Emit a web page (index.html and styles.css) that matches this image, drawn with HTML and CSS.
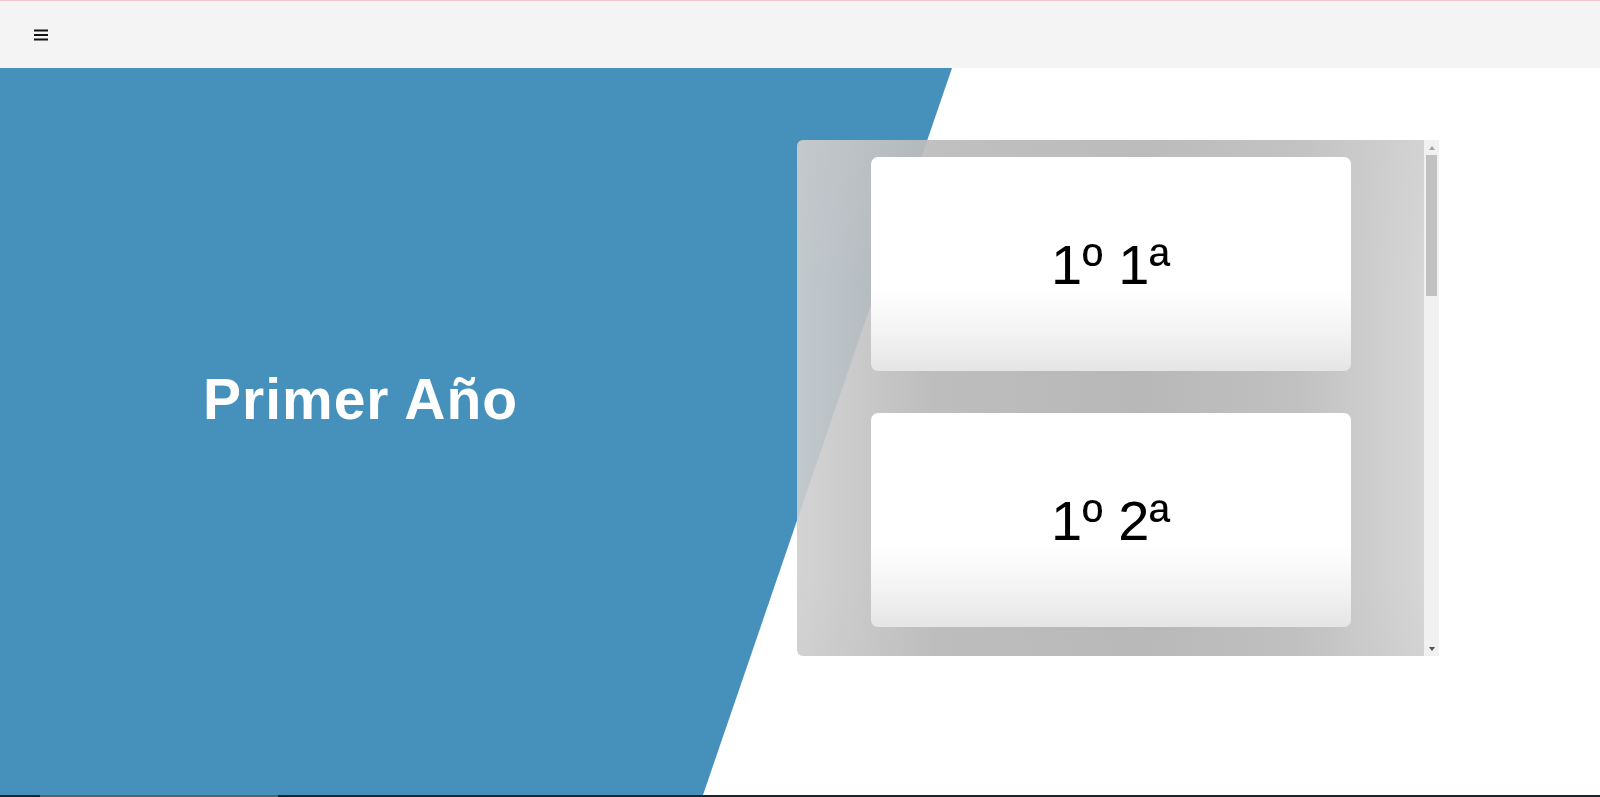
FILE: index.html
```html
<!DOCTYPE html>
<html lang="es">
<head>
<meta charset="utf-8">
<title>Primer Año</title>
<link rel="stylesheet" href="styles.css">
</head>
<body>
<header class="topbar">
  <button class="menu-btn" aria-label="Menú">
    <svg width="14" height="12" viewBox="0 0 14 12"><rect x="0" y="0.5" width="14" height="2" fill="#111"/><rect x="0" y="5" width="14" height="2" fill="#111"/><rect x="0" y="9.5" width="14" height="2" fill="#111"/></svg>
  </button>
</header>
<main class="stage">
  <div class="stage-bg"></div>
  <section class="title-col">
    <h1 class="title">Primer Año</h1>
  </section>
  <div class="panel">
    <div class="panel-list">
      <div class="card">1º 1ª</div>
      <div class="card">1º 2ª</div>
    </div>
    <div class="scrollbar">
      <span class="sb-btn"><span class="sb-arrow-up"></span></span>
      <span class="sb-track"><span class="sb-thumb"></span></span>
      <span class="sb-btn"><span class="sb-arrow-down"></span></span>
    </div>
  </div>
</main>
<footer class="bottombar"><span class="bottombar-thumb"></span></footer>
</body>
</html>
```

FILE: styles.css
```css
html, body {
  margin: 0;
  padding: 0;
  height: 797px;
  overflow: hidden;
  background: #ffffff;
  font-family: "Liberation Sans", Arial, sans-serif;
}

.topbar {
  box-sizing: border-box;
  height: 68px;
  border-top: 1px solid #f0c4cd;
  background: #f4f4f4;
  display: flex;
  align-items: center;
  padding-left: 34px;
}

.menu-btn {
  display: flex;
  padding: 0;
  margin: 0;
  border: 0;
  background: none;
  cursor: pointer;
}

.stage {
  position: relative;
  box-sizing: border-box;
  height: 727px;
  display: grid;
  grid-template-columns: 710px 642px;
  column-gap: 87px;
  align-items: stretch;
  align-content: start;
  padding-top: 72px;
}

.stage-bg {
  position: absolute;
  inset: 0;
  background: #4690bc;
  clip-path: polygon(0 0, 952px 0, 703px 100%, 0 100%);
}

.title-col {
  position: relative;
  display: flex;
  align-items: center;
  justify-content: center;
  padding-left: 11px;
  padding-top: 2px;
}

.title {
  margin: 0;
  color: #ffffff;
  font-size: 57px;
  font-weight: 700;
  letter-spacing: 1px;
  white-space: nowrap;
}

.panel {
  position: relative;
  height: 516px;
  display: flex;
  border-radius: 6px 0 0 6px;
  overflow: hidden;
}

.panel-list {
  box-sizing: border-box;
  width: 627px;
  height: 516px;
  overflow: hidden;
  background:
    linear-gradient(to bottom, rgba(200,200,200,0.25) 0%, rgba(200,200,200,0) 30%, rgba(200,200,200,0) 85%, rgba(190,190,190,0.15) 100%),
    linear-gradient(to right, rgba(207,207,207,0.9) 0%, rgba(182,182,182,0.9) 22%, rgba(176,176,176,0.9) 55%, rgba(186,186,186,0.9) 80%, rgba(210,210,210,0.9) 100%);
  display: flex;
  flex-direction: column;
  align-items: center;
  gap: 42px;
  padding: 17px 0;
}

.card {
  flex: none;
  width: 480px;
  height: 214px;
  border-radius: 7px;
  background: linear-gradient(to bottom, #ffffff 0%, #ffffff 62%, #f3f3f3 82%, #e5e5e5 100%);
  display: flex;
  align-items: center;
  justify-content: center;
  color: #000000;
  font-size: 56px;
  line-height: 1;
  padding-top: 2px;
  box-sizing: border-box;
}

.scrollbar {
  width: 15px;
  height: 516px;
  background: #f1f1f1;
  display: flex;
  flex-direction: column;
}

.sb-btn {
  height: 15px;
  flex: none;
  display: flex;
  align-items: center;
  justify-content: center;
}

.sb-arrow-up {
  width: 0;
  height: 0;
  border-left: 3.5px solid transparent;
  border-right: 3.5px solid transparent;
  border-bottom: 4px solid #a3a3a3;
}

.sb-arrow-down {
  width: 0;
  height: 0;
  border-left: 3.5px solid transparent;
  border-right: 3.5px solid transparent;
  border-top: 4px solid #505050;
}

.sb-track {
  flex: 1;
  display: flex;
  flex-direction: column;
  padding: 0 2px;
}

.sb-thumb {
  height: 141px;
  background: #c1c1c1;
}

.bottombar {
  height: 2px;
  background: #17252d;
  display: flex;
}

.bottombar-thumb {
  margin-left: 40px;
  width: 238px;
  height: 2px;
  background: #58626a;
}
```
